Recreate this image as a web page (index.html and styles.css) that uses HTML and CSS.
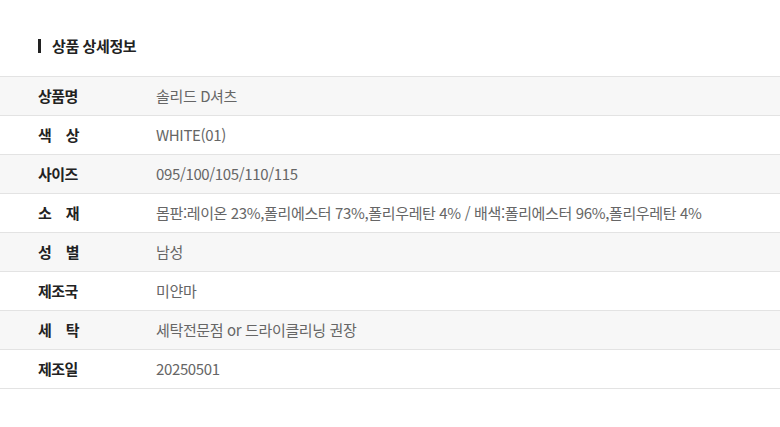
FILE: index.html
```html
<!DOCTYPE html>
<html lang="ko">
<head>
<meta charset="utf-8">
<link rel="stylesheet" href="styles.css">
</head>
<body>
<div class="page">
  <h2 class="title"><span class="bar"></span>상품 상세정보</h2>
  <div class="table">
    <div class="row alt"><div class="label">상품명</div><div class="value">솔리드 D셔츠</div></div>
    <div class="row"><div class="label">색 상</div><div class="value">WHITE(01)</div></div>
    <div class="row alt"><div class="label">사이즈</div><div class="value">095/100/105/110/115</div></div>
    <div class="row"><div class="label">소 재</div><div class="value">몸판:레이온 23%,폴리에스터 73%,폴리우레탄 4% / 배색:폴리에스터 96%,폴리우레탄 4%</div></div>
    <div class="row alt"><div class="label">성 별</div><div class="value">남성</div></div>
    <div class="row"><div class="label">제조국</div><div class="value">미얀마</div></div>
    <div class="row alt"><div class="label">세 탁</div><div class="value">세탁전문점 or 드라이클리닝 권장</div></div>
    <div class="row"><div class="label">제조일</div><div class="value">20250501</div></div>
  </div>
</div>
</body>
</html>
```
FILE: styles.css
```css
* { box-sizing: border-box; }
html, body { margin: 0; padding: 0; background: #fff; }
body {
  font-family: "Noto Sans CJK KR", "Noto Sans", sans-serif;
  color: #333;
}
.page { padding-top: 36px; }
.title {
  display: flex;
  align-items: center;
  margin: 0 0 20px 38px;
  font-size: 15px;
  font-weight: 700;
  color: #222;
  line-height: 20px;
  letter-spacing: -0.4px;
}
.bar {
  display: inline-block;
  width: 3px;
  height: 14px;
  background: #222;
  margin-right: 11px;
}
.table { border-top: 1px solid #e3e3e3; }
.row {
  display: flex;
  align-items: center;
  height: 39px;
  padding-bottom: 2px;
  border-bottom: 1px solid #e3e3e3;
  background: #fff;
}
.row.alt { background: #f7f7f7; }
.label {
  width: 41px;
  margin-left: 38px;
  margin-right: 77px;
  font-size: 15px;
  font-weight: 700;
  color: #222;
  text-align: justify;
  text-align-last: justify;
  white-space: nowrap;
  letter-spacing: -0.5px;
}
.value {
  font-size: 15px;
  color: #666;
  letter-spacing: -0.36px;
  white-space: nowrap;
}
```
